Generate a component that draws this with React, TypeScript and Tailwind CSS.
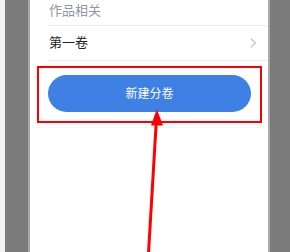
import React from 'react';

const ChevronRight: React.FC = () => (
  <svg width="7" height="10" viewBox="0 0 7 10" fill="none">
    <path d="M1.2 1l4.2 4-4.2 4" stroke="#c4c6cc" strokeWidth="1.2" strokeLinecap="round" strokeLinejoin="round" />
  </svg>
);

export default function App() {
  return (
    <div
      className="relative flex h-[252px] w-[290px] overflow-hidden bg-white"
      style={{ fontFamily: '"Noto Sans", "Noto Sans CJK SC", sans-serif' }}
    >
      <div className="w-[5px] bg-[#f2f2f2]" />
      <div className="w-[23px] bg-[#7b7b7b]" />
      <div className="w-[2px] bg-[#a9a9a9]" />

      <div className="flex w-[238px] flex-col bg-white">
        <div className="ml-[17px] flex h-[26px] items-start border-b border-[#ececec] pt-[1px]">
          <span className="pl-[2px] text-[13px] leading-[18px] text-[#9097a3]">作品相关</span>
        </div>
        <div className="ml-[17px] flex h-[35px] items-center justify-between border-b border-[#ececec] pr-[11px]">
          <span className="pl-[2px] text-[13px] text-[#222222]">第一卷</span>
          <ChevronRight />
        </div>
        <div className="mt-[14px] pl-[18px] pr-[17px]">
          <button className="flex h-[37px] w-full items-center justify-center rounded-full bg-[#3e80e4] text-[12px] text-white">
            新建分卷
          </button>
        </div>
        <div className="mx-[6px] mt-[15px] h-px bg-[#f3f3f3]" />
      </div>

      <div className="w-[2px] bg-[#a9a9a9]" />
      <div className="flex-1 bg-[#7b7b7b]" />

      <div className="absolute left-[37px] top-[66px] h-[57px] w-[225px] border-2 border-[#ff0000]" />
      <svg className="absolute left-0 top-0" width="290" height="252" viewBox="0 0 290 252">
        <line x1="156.5" y1="118" x2="148.5" y2="253" stroke="#ff0000" strokeWidth="3" />
        <polygon points="156.8,109 151,125.5 163,125.5" fill="#ff0000" />
      </svg>
    </div>
  );
}
